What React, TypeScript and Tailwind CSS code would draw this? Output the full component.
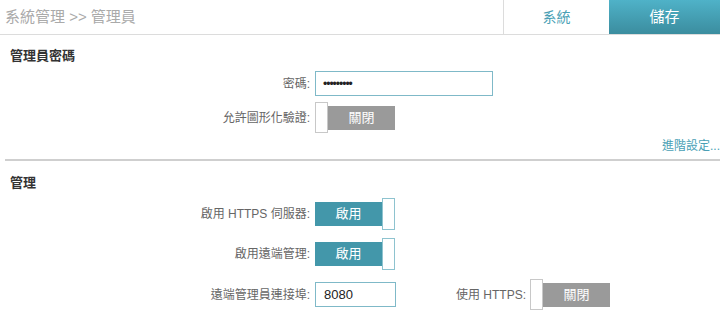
import React from 'react';

const font = { fontFamily: '"Liberation Sans", "Noto Sans CJK TC", sans-serif' };

function OffToggle() {
    return (
        <div className="flex items-center">
            <span className="w-[13px] h-[31px] bg-white border border-[#c8c8c8]" />
            <span className="w-[67px] h-[24px] bg-[#9a9a9a] text-white text-[13px] flex items-center justify-center">
                關閉
            </span>
        </div>
    );
}

function OnToggle() {
    return (
        <div className="flex items-center">
            <span className="w-[67px] h-[24px] bg-[#4397aa] text-white text-[13px] flex items-center justify-center">
                啟用
            </span>
            <span className="w-[13px] h-[32px] bg-white border border-[#8ec3cf]" />
        </div>
    );
}

function Row({ label, children, className }: { label: string; children: React.ReactNode; className?: string }) {
    return (
        <div className={`flex items-center ${className ?? ''}`}>
            <div className="w-[311px] pr-[1px] text-right text-[12px] text-[#666]">{label}</div>
            <div className="ml-[4px] flex items-center">{children}</div>
        </div>
    );
}

export default function App() {
    return (
        <div className="w-[720px] h-[313px] bg-white overflow-hidden" style={font}>
            {/* header */}
            <div className="h-[35px] flex border-b border-[#dcdcdc]">
                <div className="flex-1 flex items-center pl-[5px] text-[15px] text-[#aaa]">系統管理 &gt;&gt; 管理員</div>
                <div className="w-[106px] border-l border-[#dcdcdc] flex items-center justify-center text-[14px] text-[#4a9fb5]">
                    系統
                </div>
                <div className="w-[111px] bg-gradient-to-b from-[#4fb2c8] to-[#3b8d9f] flex items-center justify-center text-[15px] text-white">
                    儲存
                </div>
            </div>

            {/* 管理員密碼 */}
            <div className="pl-[10px] pt-[13px] text-[13px] font-bold text-[#333] leading-[16px]">管理員密碼</div>
            <Row label="密碼:" className="mt-[7px]">
                <div className="w-[178px] h-[25px] border border-[#7fb9c8] flex items-center pl-[7px] text-[12px] text-[#222] tracking-[-1px]">
                    •••••••••
                </div>
            </Row>
            <Row label="允許圖形化驗證:" className="mt-[6px]">
                <OffToggle />
            </Row>
            <div className="flex justify-end mt-[7px] h-[12px]">
                <span className="text-[12px] text-[#4a9fb5] leading-[12px] whitespace-nowrap">進階設定...</span>
            </div>
            <div className="ml-[5px] mt-[7px] h-[2px] bg-[#cfcfcf]" />

            {/* 管理 */}
            <div className="pl-[10px] pt-[14px] text-[13px] font-bold text-[#333] leading-[16px]">管理</div>
            <Row label="啟用 HTTPS 伺服器:" className="mt-[7px]">
                <OnToggle />
            </Row>
            <Row label="啟用遠端管理:" className="mt-[8px]">
                <OnToggle />
            </Row>
            <Row label="遠端管理員連接埠:" className="mt-[9px]">
                <div className="w-[81px] h-[25px] border border-[#7fb9c8] flex items-center pl-[8px] text-[13px] text-[#222]">
                    8080
                </div>
                <span className="ml-[60px] mr-[4px] text-[12px] text-[#666]">使用 HTTPS:</span>
                <OffToggle />
            </Row>
        </div>
    );
}
